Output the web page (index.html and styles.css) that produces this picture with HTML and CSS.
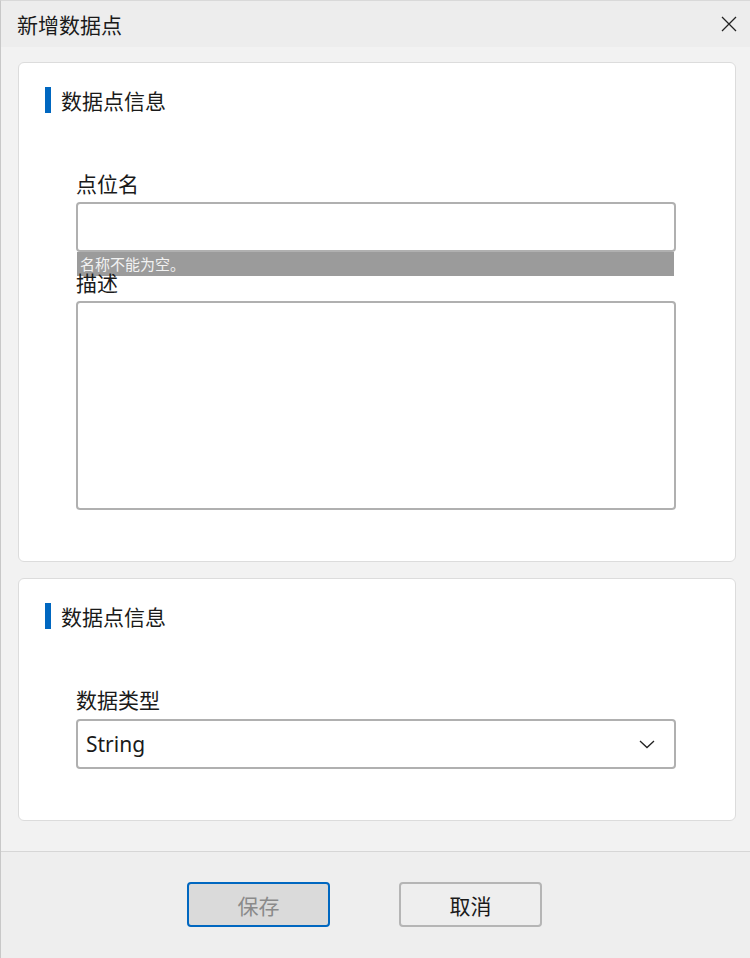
FILE: index.html
```html
<!DOCTYPE html>
<html lang="zh-CN">
<head>
    <meta charset="UTF-8">
    <title>新增数据点</title>
    <link rel="stylesheet" href="styles.css">
</head>
<body>
    <div class="window">
        <div class="title-bar">
            <span class="title">新增数据点</span>
            <svg class="close" width="16" height="16" viewBox="0 0 16 16">
                <path d="M1 1 L15 15 M15 1 L1 15" stroke="#222" stroke-width="1.3" fill="none"/>
            </svg>
        </div>

        <div class="content">
            <div class="card">
                <div class="section-title">数据点信息</div>

                <label class="field-label" for="point_name">点位名</label>
                <input type="text" id="point_name" class="text-input">
                <div class="error-tip">名称不能为空。</div>

                <label class="field-label overlap" for="description">描述</label>
                <textarea id="description" class="text-area"></textarea>
            </div>

            <div class="card">
                <div class="section-title">数据点信息</div>

                <div class="field-label select-label">数据类型</div>
                <div class="select-box">
                    <span>String</span>
                    <svg width="16" height="10" viewBox="0 0 16 10">
                        <path d="M1 2 L8 8.5 L15 2" stroke="#222" stroke-width="1.3" fill="none"/>
                    </svg>
                </div>
            </div>
        </div>

        <div class="footer">
            <button type="button" class="btn btn-save">保存</button>
            <button type="button" class="btn btn-cancel">取消</button>
        </div>
    </div>
</body>
</html>
```

FILE: styles.css
```css
body {
    margin: 0;
    padding: 0;
    font-family: "Noto Sans CJK SC", "Noto Sans", sans-serif;
    color: #1a1a1a;
    background-color: #ffffff;
}
.window {
    width: 750px;
    height: 958px;
    box-sizing: border-box;
    border-left: 1px solid #c8c8c8;
    border-top: 1px solid #d9d9d9;
    display: flex;
    flex-direction: column;
    background-color: #f2f2f2;
}
.title-bar {
    height: 46px;
    flex: none;
    display: flex;
    align-items: center;
    justify-content: space-between;
    padding: 0 13px 0 16px;
    background-color: #ededed;
}
.title {
    font-size: 21px;
    line-height: 26px;
    color: #1a1a1a;
}
.content {
    flex: 1;
    display: flex;
    flex-direction: column;
    gap: 16px;
    padding: 15px 14px 0 17px;
}
.card {
    background-color: #ffffff;
    border: 1px solid #dcdcdc;
    border-radius: 6px;
    padding: 24px 58px 51px 57px;
    display: flex;
    flex-direction: column;
}
.section-title {
    margin-left: -31px;
    margin-bottom: 57px;
    padding-left: 10px;
    border-left: 6px solid #0067c0;
    font-size: 21px;
    line-height: 26px;
}
.field-label {
    display: block;
    font-size: 21px;
    line-height: 26px;
    margin-bottom: 6px;
}
.field-label.select-label {
    margin-bottom: 7px;
}
.field-label.overlap {
    margin-top: -7px;
    position: relative;
}
.text-input,
.text-area,
.select-box {
    box-sizing: border-box;
    width: 600px;
    margin: 0;
    border: 2px solid #b0b0b0;
    border-radius: 4px;
    background-color: #ffffff;
    font-family: "Noto Sans", "Noto Sans CJK SC", sans-serif;
    font-size: 21px;
    outline: none;
}
.text-input {
    height: 50px;
    padding: 0 8px;
}
.text-area {
    height: 209px;
    resize: none;
    padding: 6px 8px;
}
.error-tip {
    width: 597px;
    height: 24px;
    margin-left: 1px;
    padding-left: 3px;
    box-sizing: border-box;
    background-color: #9b9b9b;
    color: #f2f2f2;
    font-size: 15px;
    line-height: 24px;
}
.select-box {
    height: 50px;
    display: flex;
    align-items: center;
    justify-content: space-between;
    padding: 0 19px 0 8px;
    color: #1a1a1a;
}
.footer {
    height: 107px;
    flex: none;
    box-sizing: border-box;
    border-top: 1px solid #d6d6d6;
    background-color: #eeeeee;
    display: flex;
    align-items: flex-start;
    gap: 69px;
    padding: 30px 0 0 186px;
}
.btn {
    width: 143px;
    height: 45px;
    border-radius: 4px;
    font-family: "Noto Sans CJK SC", sans-serif;
    font-size: 21px;
    cursor: pointer;
}
.btn-save {
    background-color: #dadada;
    border: 2px solid #0067c0;
    color: #8a8a8a;
}
.btn-cancel {
    background-color: #eeeeee;
    border: 2px solid #b5b5b5;
    color: #1a1a1a;
}
```
